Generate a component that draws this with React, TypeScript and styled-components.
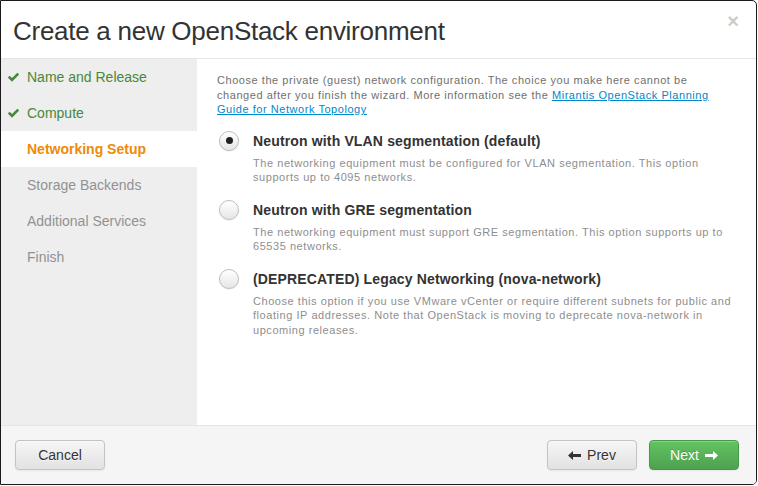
import React from "react";
import styled, { createGlobalStyle } from "styled-components";

const Global = createGlobalStyle`
  html, body { margin: 0; padding: 0; background: #fff; }
  body { font-family: "Liberation Sans", Arial, sans-serif; }
  * { box-sizing: border-box; }
`;

const Modal = styled.div`
  width: 757px;
  height: 485px;
  border: 1px solid #1a1a1a;
  border-radius: 0 5px 5px 0;
  background: #fff;
  display: flex;
  flex-direction: column;
  overflow: hidden;
`;

const Header = styled.div`
  height: 58px;
  flex: none;
  border-bottom: 1px solid #e5e5e5;
  display: flex;
  align-items: center;
  justify-content: space-between;
  padding: 0 17px 0 12px;
`;

const Title = styled.h3`
  margin: 0;
  font-size: 26px;
  letter-spacing: -0.27px;
  font-weight: normal;
  color: #333;
  line-height: 30px;
  margin-top: 2px;
`;

const Close = styled.span`
  font-size: 20px;
  font-weight: bold;
  color: #000;
  opacity: 0.2;
  line-height: 20px;
  align-self: flex-start;
  margin-top: 10px;
`;

const Body = styled.div`
  flex: 1;
  display: flex;
  min-height: 0;
`;

const Sidebar = styled.ul`
  width: 196px;
  flex: none;
  background: #eee;
  margin: 0;
  padding: 0;
  list-style: none;
`;

type ItemState = "done" | "active" | "todo";

const Item = styled.li<{ $state: ItemState }>`
  height: 36px;
  display: flex;
  align-items: center;
  padding-left: 6px;
  font-size: 14px;
  background: ${(p) => (p.$state === "active" ? "#fff" : "transparent")};
  color: ${(p) =>
    p.$state === "done" ? "#47893a" : p.$state === "active" ? "#ee8a08" : "#929292"};
  font-weight: ${(p) => (p.$state === "active" ? "bold" : "normal")};
`;

const IconSlot = styled.span`
  width: 20px;
  flex: none;
  display: flex;
  align-items: center;
`;

const Content = styled.div`
  flex: 1;
  padding: 14px 20px 0 20px;
`;

const Intro = styled.p`
  margin: 0 0 14px 0;
  font-size: 11px;
  letter-spacing: 0.55px;
  line-height: 14.5px;
  color: #707070;
`;

const Link = styled.a`
  color: #0088cc;
  text-decoration: underline;
`;

const Option = styled.div`
  margin-bottom: 15px;
`;

const OptionHead = styled.label`
  display: flex;
  align-items: center;
  height: 20px;
  gap: 14px;
  padding-left: 2px;
`;

const Radio = styled.span<{ $checked?: boolean }>`
  width: 20px;
  height: 20px;
  border-radius: 50%;
  border: 1px solid #bdbdbd;
  background: linear-gradient(#ffffff, #e6e6e6);
  box-shadow: inset 0 1px 1px rgba(255, 255, 255, 0.8), 0 1px 1px rgba(0, 0, 0, 0.06);
  display: flex;
  align-items: center;
  justify-content: center;
  flex: none;
  &::after {
    content: "";
    display: ${(p) => (p.$checked ? "block" : "none")};
    width: 7px;
    height: 7px;
    border-radius: 50%;
    background: #222;
  }
`;

const OptionTitle = styled.span`
  font-size: 14px;
  letter-spacing: 0.15px;
  font-weight: bold;
  color: #333;
`;

const OptionDesc = styled.p`
  margin: 5px 0 0 36px;
  font-size: 11px;
  letter-spacing: 0.55px;
  line-height: 14.5px;
  color: #8e8e8e;
`;

const Footer = styled.div`
  height: 59px;
  flex: none;
  background: #f5f5f5;
  border-top: 1px solid #e5e5e5;
  display: flex;
  align-items: flex-start;
  padding: 14px 17px 0 14px;
  gap: 12px;
`;

const Spacer = styled.div`
  flex: 1;
`;

const Button = styled.button<{ $primary?: boolean }>`
  width: 90px;
  height: 30px;
  font-family: "Liberation Sans", Arial, sans-serif;
  font-size: 14px;
  border-radius: 4px;
  display: flex;
  align-items: center;
  justify-content: center;
  gap: 6px;
  padding: 0;
  cursor: pointer;
  color: ${(p) => (p.$primary ? "#fff" : "#333")};
  text-shadow: ${(p) =>
    p.$primary ? "0 -1px 0 rgba(0,0,0,0.2)" : "0 1px 1px rgba(255,255,255,0.75)"};
  background: ${(p) =>
    p.$primary ? "linear-gradient(#62c462, #4fa14f)" : "linear-gradient(#f6f6f6, #e2e2e2)"};
  border: 1px solid ${(p) => (p.$primary ? "#46994a" : "#c3c3c3")};
  box-shadow: inset 0 1px 0 rgba(255, 255, 255, 0.25), 0 1px 2px rgba(0, 0, 0, 0.06);
`;

const Check = () => (
  <svg width="13" height="11" viewBox="0 0 13 11">
    <path d="M0.8 5.6 L2.7 3.7 L5 6 L10.3 0.7 L12.2 2.6 L5 9.8 Z" fill="#47893a" />
  </svg>
);

const Arrow = ({ dir, color }: { dir: "left" | "right"; color: string }) => (
  <svg width="13" height="9" viewBox="0 0 13 9" style={{ transform: dir === "right" ? "scaleX(-1)" : undefined }}>
    <path d="M0 4.5 L5 0 L5 3 L13 3 L13 6 L5 6 L5 9 Z" fill={color} />
  </svg>
);

const steps: { label: string; state: ItemState }[] = [
  { label: "Name and Release", state: "done" },
  { label: "Compute", state: "done" },
  { label: "Networking Setup", state: "active" },
  { label: "Storage Backends", state: "todo" },
  { label: "Additional Services", state: "todo" },
  { label: "Finish", state: "todo" },
];

const options = [
  {
    title: "Neutron with VLAN segmentation (default)",
    desc: "The networking equipment must be configured for VLAN segmentation. This option supports up to 4095 networks.",
    checked: true,
  },
  {
    title: "Neutron with GRE segmentation",
    desc: "The networking equipment must support GRE segmentation. This option supports up to 65535 networks.",
    checked: false,
  },
  {
    title: "(DEPRECATED) Legacy Networking (nova-network)",
    desc: "Choose this option if you use VMware vCenter or require different subnets for public and floating IP addresses. Note that OpenStack is moving to deprecate nova-network in upcoming releases.",
    checked: false,
  },
];

export default function App() {
  return (
    <>
      <Global />
      <Modal>
        <Header>
          <Title>Create a new OpenStack environment</Title>
          <Close>×</Close>
        </Header>
        <Body>
          <Sidebar>
            {steps.map((s) => (
              <Item key={s.label} $state={s.state}>
                <IconSlot>{s.state === "done" && <Check />}</IconSlot>
                {s.label}
              </Item>
            ))}
          </Sidebar>
          <Content>
            <Intro>
              Choose the private (guest) network configuration. The choice you make here cannot be
              changed after you finish the wizard. More information see the{" "}
              <Link href="#">Mirantis OpenStack Planning Guide for Network Topology</Link>
            </Intro>
            {options.map((o) => (
              <Option key={o.title}>
                <OptionHead>
                  <Radio $checked={o.checked} />
                  <OptionTitle>{o.title}</OptionTitle>
                </OptionHead>
                <OptionDesc>{o.desc}</OptionDesc>
              </Option>
            ))}
          </Content>
        </Body>
        <Footer>
          <Button>Cancel</Button>
          <Spacer />
          <Button>
            <Arrow dir="left" color="#333" />
            Prev
          </Button>
          <Button $primary>
            Next
            <Arrow dir="right" color="#fff" />
          </Button>
        </Footer>
      </Modal>
    </>
  );
}
